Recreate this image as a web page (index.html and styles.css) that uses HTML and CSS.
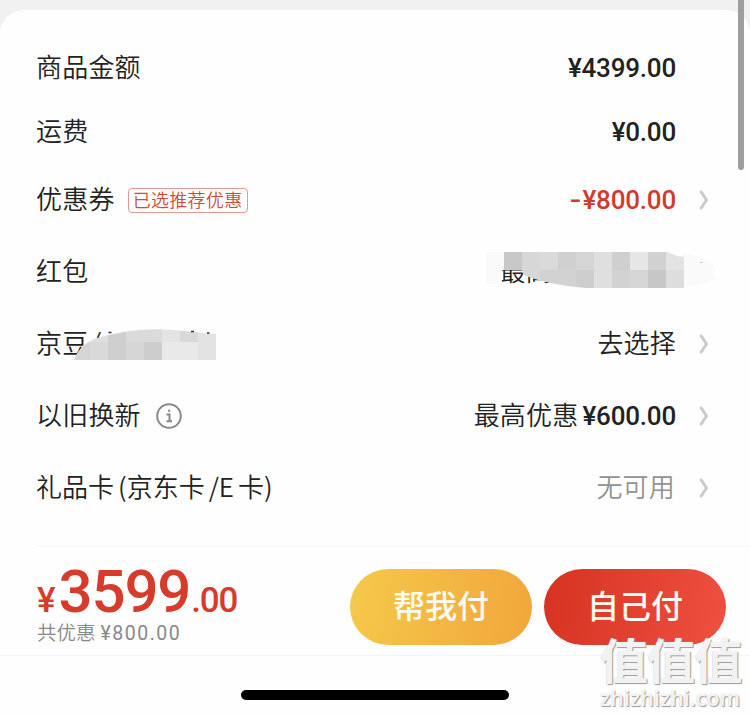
FILE: index.html
```html
<!DOCTYPE html>
<html lang="zh-CN">
<head>
<meta charset="utf-8">
<title>结算</title>
<link rel="stylesheet" href="styles.css">
</head>
<body>
<main class="sheet">
  <section class="rows">
    <div class="row short"><span class="zh">商品金额</span><b class="num end">¥4399.00</b></div>
    <div class="row short"><span class="zh">运费</span><b class="num end">¥0.00</b></div>
    <div class="row"><span class="zh">优惠券</span><span class="tag">已选推荐优惠</span><b class="num red end"><span class="minus">-</span>¥800.00</b><svg class="chev" viewBox="0 0 10 20"><path d="M1.5 1 7.5 10 1.5 19"/></svg></div>
    <div class="row"><span class="zh">红包</span><span class="zh end partial">最高</span>
      <svg class="mask mask-red" viewBox="0 0 230 38" shape-rendering="crispEdges">
        <path fill="#fafafa" d="M0 0H18V18H16V32H0zM196 2Q215 1 228 13L230 28 196 36z"/>
        <clipPath id="m1"><path d="M18 0H182Q188 4 198 5V36H100Q58 32 38 23L36 18H18z"/></clipPath>
        <g clip-path="url(#m1)">
          <path fill="#c8c8c8" d="M18 0h18v18H18z"/><path fill="#d7d7d7" d="M36 0h18v36H36z"/><path fill="#dadada" d="M54 0h18v18H54z"/><path fill="#d0d0d0" d="M72 0h18v18H72z"/><path fill="#d5d5d5" d="M90 0h18v18H90z"/><path fill="#dfdfdf" d="M108 0h18v36h-18z"/><path fill="#cfcfcf" d="M126 0h18v18h-18z"/><path fill="#e6e6e6" d="M144 0h18v18h-18z"/><path fill="#d1d1d1" d="M162 0h18v18h-18z"/><path fill="#e3e3e3" d="M180 0h18v18h-18z"/>
          <path fill="#d2d2d2" d="M54 18h36v18H54z"/><path fill="#cecece" d="M90 18h18v18H90z"/><path fill="#d2d2d2" d="M126 18h18v18h-18z"/><path fill="#d5d5d5" d="M144 18h18v18h-18z"/><path fill="#c7c7c7" d="M162 18h18v18h-18z"/><path fill="#dddddd" d="M180 18h18v18h-18z"/>
        </g>
        <path fill="#ccc" d="M214 10h3v1h-3z"/>
      </svg>
    </div>
    <div class="row"><span class="zh">京豆<i class="paren">(</i></span><span class="zh end">去选择</span><svg class="chev" viewBox="0 0 10 20"><path d="M1.5 1 7.5 10 1.5 19"/></svg>
      <svg class="mask mask-bean" viewBox="0 0 200 48">
        <path fill="#fefefe" d="M0 32Q5 18 20 11 65-3 142 8V32L196 28 70 42H0z"/>
        <clipPath id="m2"><path d="M0 32Q5 18 20 11 65-3 110 3L142 6V32H0z"/></clipPath>
        <g clip-path="url(#m2)" shape-rendering="crispEdges">
          <path fill="#dedede" d="M0 0h34v14H0z"/><path fill="#d5d5d5" d="M0 14h16v18H0z"/><path fill="#d9d9d9" d="M16 14h18v18H16z"/><path fill="#cfcfcf" d="M34 0h18v32H34z"/><path fill="#dadada" d="M52 0h36v14H52z"/><path fill="#d5d5d5" d="M52 14h18v18H52z"/><path fill="#cdcdcd" d="M70 14h18v18H70z"/><path fill="#e4e4e4" d="M88 0h18v14H88z"/><path fill="#d9d9d9" d="M106 0h18v14h-18z"/><path fill="#e3e3e3" d="M124 0h18v14h-18z"/><path fill="#e9e9e9" d="M88 14h36v18H88z"/><path fill="#e3e3e3" d="M124 14h18v18h-18z"/>
        </g>
        <path stroke="#333" stroke-width="1.5" d="M34.500 4.500h3M117 3.500h3M133 5h2.500"/>
      </svg>
    </div>
    <div class="row"><span class="zh">以旧换新</span><svg class="info" viewBox="0 0 26 26"><circle cx="13" cy="13" r="11.8"/><path d="M10.500 11.500H13.500V18M10.500 18.200H16M12 7.800H14.200"/></svg><span class="zh end">最高优惠</span><b class="num gap">¥600.00</b><svg class="chev" viewBox="0 0 10 20"><path d="M1.5 1 7.5 10 1.5 19"/></svg></div>
    <div class="row"><span class="zh card-label">礼品卡<i>(</i>京东卡<i>/E</i><i>卡)</i></span><span class="zh end muted">无可用</span><svg class="chev" viewBox="0 0 10 20"><path d="M1.5 1 7.5 10 1.5 19"/></svg></div>
  </section>
  <footer class="bar">
    <div class="total">
      <div class="price"><span class="yen">¥</span><span class="whole">3599</span><span class="cents">.00</span></div>
      <div class="saved">共优惠<span>¥800.00</span></div>
    </div>
    <button class="btn gold">帮我付</button>
    <button class="btn crimson">自己付</button>
  </footer>
  <div class="home"></div>
</main>
<div class="scroll"></div>
<div class="stamp"><div class="stamp-name">值值值</div><div class="stamp-url">zhizhizhi.com</div></div>
</body>
</html>
```
FILE: styles.css
```css
* { box-sizing: border-box; }
body {
  margin: 0;
  padding-top: 10px;
  height: 716px;
  overflow: hidden;
  position: relative;
  background: #f1f1f1;
  color: #222;
  font: 26px/36px "Noto Sans CJK SC", sans-serif;
}
.sheet {
  height: 706px;
  background: #fefefe;
  border-radius: 24px 24px 0 0;
  padding-top: 26px;
  display: flex;
  flex-direction: column;
}
.rows { height: 511px; margin-left: 36px; border-bottom: 1px solid #f7f7f7; }
.row {
  height: 72px;
  display: flex;
  align-items: center;
  padding-right: 38px;
  position: relative;
  white-space: nowrap;
  font-weight: 350;
}
.row.short { height: 64px; padding-right: 74px; }
.zh { padding-bottom: 4px; letter-spacing: .2px; }
.end { margin-left: auto; }
.num { font-family: Roboto, sans-serif; font-weight: 500; font-size: 26px; letter-spacing: -.2px; }
.gap { margin-left: 4px; }
.red { color: #cf3b2c; }
.minus { display: inline-block; transform: scaleX(1.3); margin-right: 3px; }
.muted { color: #929292; padding-right: 1px; }
.tag {
  margin-left: 13px;
  width: 120px;
  height: 25px;
  border: 1px solid #e59a91;
  border-radius: 4px;
  color: #d14a3a;
  font-size: 18px;
  letter-spacing: .3px;
  line-height: 20px;
  text-align: center;
}
.chev { width: 10px; height: 20px; margin: 0 3px 0 23px; fill: none; stroke: #c8c8c8; stroke-width: 2.8; }
.info { width: 26px; height: 26px; margin-left: 15px; fill: none; stroke: #888; stroke-width: 2; }
.partial { margin-right: 160px; }
.paren { font-style: normal; margin-left: 5px; }
.card-label { letter-spacing: 0; }
.card-label i { font-style: normal; margin-left: 4px; }
.mask { position: absolute; }
.mask-red { left: 450px; top: 16px; width: 230px; height: 38px; }
.mask-bean { left: 38px; top: 20px; width: 200px; height: 48px; }
.bar {
  height: 109px;
  display: flex;
  align-items: flex-start;
  padding: 22px 24px 0 37px;
  border-bottom: 1px solid #f5f5f5;
}
.total { width: 313px; }
.price {
  height: 50px;
  display: flex;
  align-items: baseline;
  color: #d63b2b;
  font-family: Roboto, sans-serif;
  font-weight: 500;
  line-height: 46px;
}
.yen { font-size: 35px; margin-right: 3px; }
.whole { font-size: 60px; letter-spacing: -1.2px; }
.cents { font-size: 35px; letter-spacing: -1.2px; margin-left: 1px; }
.saved { font-size: 19.5px; line-height: 26px; color: #888; font-weight: 350; }
.saved span { margin-left: 5px; font-family: Roboto, sans-serif; letter-spacing: 1.5px; font-weight: 400; }
.btn {
  width: 182px;
  height: 76px;
  border: 0;
  padding: 0 0 6px;
  border-radius: 38px;
  color: #fffaf2;
  font: 500 32px/44px "Noto Sans CJK SC", sans-serif;
}
.btn + .btn { margin-left: 12px; }
.gold { background: linear-gradient(100deg, #f5c94b, #f1a63a); }
.crimson { background: linear-gradient(100deg, #d63322, #ef5040); }
.home { width: 268px; height: 10px; margin: 34px 0 0 241px; border-radius: 5px; background: #000; }
.scroll { position: absolute; left: 738px; top: -10px; width: 6px; height: 180px; border-radius: 3px; background: #9d9d9d; }
.stamp {
  position: absolute;
  left: 600px;
  top: 631px;
  width: 146px;
  color: rgba(255, 255, 255, .9);
  text-shadow: 1px 1px 1px #999, 0 0 1px #bbb;
  white-space: nowrap;
}
.stamp-name { font-weight: 700; font-size: 48px; line-height: 55px; letter-spacing: -.8px; }
.stamp-url { font: 600 21.5px/24px "Open Sans", sans-serif; }
```
